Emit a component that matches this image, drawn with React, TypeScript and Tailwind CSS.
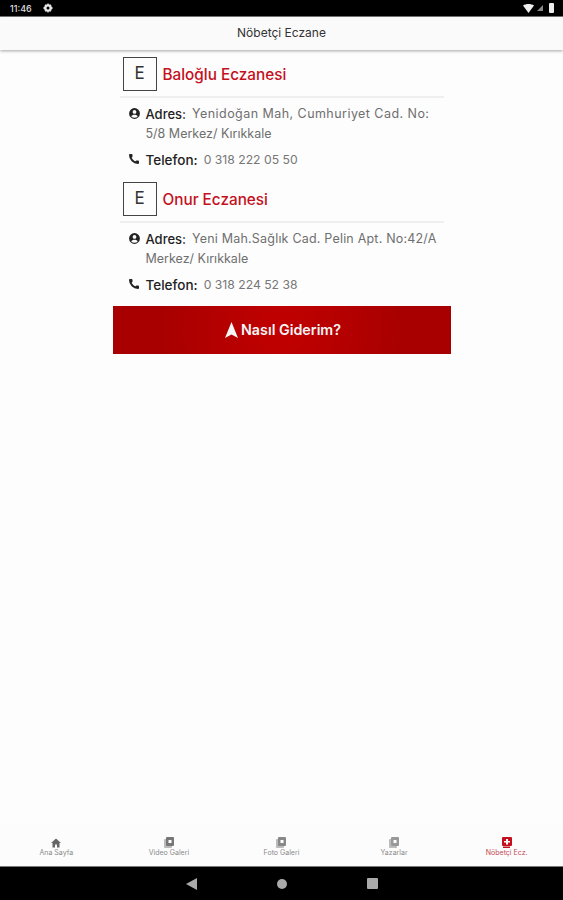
import { Phone } from "lucide-react";

const font = "font-['Inter','Liberation_Sans',sans-serif]";

const pharmacies = [
  {
    name: "Baloğlu Eczanesi",
    address: "Yenidoğan Mah, Cumhuriyet Cad. No:",
    addressClass: "tracking-[0.45px]",
    address2: "5/8 Merkez/ Kırıkkale",
    phone: "0 318 222 05 50",
  },
  {
    name: "Onur Eczanesi",
    address: "Yeni Mah.Sağlık Cad. Pelin Apt. No:42/A",
    addressClass: "tracking-[0.2px]",
    address2: "Merkez/ Kırıkkale",
    phone: "0 318 224 52 38",
  },
];

function StatusBar() {
  return (
    <div className="flex h-[17px] items-center justify-between border-b border-[#777] bg-black pl-[10px] pr-[9px] text-[#ddd]">
      <div className="flex items-center gap-[11px]">
        <span className="text-[9px] font-medium leading-none">11:46</span>
        <svg width="10" height="10" viewBox="0 0 10 10" fill="#e5e5e5">
          <path d="M5 0l1 1.500h2L8.500 3.500 10 5 8.500 6.500 8 8.500H6L5 10 4 8.500H2L1.500 6.500 0 5l1.500-1.500L2 1.500h2z" />
          <circle cx="5" cy="5" r="1.500" fill="#000" />
        </svg>
      </div>
      <div className="flex items-center gap-[3px]">
        <svg width="11" height="9" viewBox="0 0 11 9" fill="#eee">
          <path d="M0 1.500C3 -.500 8 -.500 11 1.500L5.500 9z" />
        </svg>
        <svg width="6" height="6" viewBox="0 0 6 6" fill="#888">
          <path d="M6 0v6H0z" />
        </svg>
        <div className="ml-[3px] h-[10px] w-[5px] rounded-[1px] bg-[#eee]" />
      </div>
    </div>
  );
}

function PharmacyCard({ p }: { p: (typeof pharmacies)[number] }) {
  return (
    <div className="h-[125px]">
      <div className="mx-[7px] box-content flex h-[39px] items-start border-b-2 border-[#efefef] pl-[3px]">
        <div className="flex h-[34px] w-[34px] items-center justify-center border border-[#444] text-[17px] text-[#333]">
          E
        </div>
        <span className="ml-[6px] text-[15.300px] font-medium leading-[36px] text-[#c4101c]">{p.name}</span>
      </div>
      <div className="mt-[6px] flex pl-[15px] pr-[12px]">
        <svg className="mt-[3px] shrink-0" width="13" height="13" viewBox="0 0 24 24" fill="#222">
          <path d="M12 2a10 10 0 1 0 0 20 10 10 0 0 0 0-20zm0 3.500a3.500 3.500 0 1 1 0 7 3.500 3.500 0 0 1 0-7zm0 14.500a8 8 0 0 1-6.200-3c.800-1.700 3.800-2.800 6.200-2.800s5.400 1.100 6.200 2.800A8 8 0 0 1 12 20z" />
        </svg>
        <div className="ml-[5px] text-[12.500px] leading-[20px] text-[#6f6f6f]">
          <div className="flex whitespace-nowrap">
            <span className="text-[13px] font-medium text-[#222]">Adres:</span>
            <span className={`ml-[6px] ${p.addressClass}`}>{p.address}</span>
          </div>
          <div>{p.address2}</div>
        </div>
      </div>
      <div className="mt-[6px] flex items-center pl-[15px]">
        <Phone className="mb-[3px] shrink-0 text-[#222]" size={12} fill="#222" strokeWidth={0} />
        <span className="ml-[6px] text-[13.500px] font-medium leading-[20px] text-[#222]">Telefon:</span>
        <span className="ml-[6px] text-[12.200px] text-[#777]">{p.phone}</span>
      </div>
    </div>
  );
}

function NavItem({ label, icon, active }: { label: string; icon: React.ReactNode; active?: boolean }) {
  return (
    <div className="flex w-[112.600px] flex-col items-center">
      <div className="flex h-[13px] items-center justify-center">{icon}</div>
      <span className={`-mt-[1px] text-[7px] leading-[10px] ${active ? "text-[#c44a55]" : "text-[#8a8a8a]"}`}>{label}</span>
    </div>
  );
}

function GalleryIcon({ color = "#777" }: { color?: string }) {
  return (
    <svg width="10" height="11" viewBox="0 0 10 11">
      <rect x="0" y="2" width="8" height="9" rx="1" fill="#bbb" />
      <rect x="2" y="0" width="8" height="9" rx="1" fill={color} />
      <rect x="4.500" y="3" width="3" height="3" fill="#fff" />
    </svg>
  );
}

export default function App() {
  return (
    <div className={`flex h-[900px] w-[563px] flex-col bg-[#fdfdfd] ${font}`}>
      <StatusBar />
      <header className="z-10 flex h-[33px] items-center justify-center bg-[#fafafa] pb-[1px] text-[12px] text-[#333] shadow-[0_1px_3px_rgba(0,0,0,0.35)]">
        Nöbetçi Eczane
      </header>
      <main className="mx-auto flex w-[338px] flex-1 flex-col pt-[7px]">
        <PharmacyCard p={pharmacies[0]} />
        <PharmacyCard p={pharmacies[1]} />
        <button className="-mt-[1px] flex h-[48px] w-full items-center justify-center gap-[3px] bg-[radial-gradient(circle_at_center,#c20000,#a80000_70%)] pl-[3px] text-[14.300px] font-semibold text-[#f5f5f5]">
          <svg width="13" height="16" viewBox="0 0 13 16" fill="#f5f5f5">
            <path d="M6.500 0L13 16 6.500 12.500 0 16z" />
          </svg>
          Nasıl Giderim?
        </button>
      </main>
      <nav className="flex h-[41px] items-start bg-[#fcfcfc] pt-[11px]">
        <NavItem
          label="Ana Sayfa"
          icon={
            <svg width="10" height="10" viewBox="0 0 10 10" fill="#666">
              <path d="M5 .500L10 5H8.500v4.500H6V6.500H4v3H1.500V5H0z" />
            </svg>
          }
        />
        <NavItem label="Video Galeri" icon={<GalleryIcon />} />
        <NavItem label="Foto Galeri" icon={<GalleryIcon color="#888" />} />
        <NavItem label="Yazarlar" icon={<GalleryIcon color="#999" />} />
        <NavItem
          active
          label="Nöbetçi Ecz."
          icon={
            <svg width="10" height="11" viewBox="0 0 10 11">
              <rect width="10" height="9" rx="1" fill="#c4101c" />
              <path d="M4 2h2v2h2v1.500H6v2H4v-2H2V4h2z" fill="#fff" />
              <rect x="1" y="9.500" width="7" height="1.500" fill="#c4101c" />
            </svg>
          }
        />
      </nav>
      <div className="flex h-[34px] items-center justify-center gap-[80px] border-t border-[#777] bg-black">
        <svg width="11" height="12" viewBox="0 0 11 12" fill="#aaa">
          <path d="M11 0v12L0 6z" />
        </svg>
        <div className="h-[10px] w-[10px] rounded-full bg-[#aaa]" />
        <div className="h-[11px] w-[11px] rounded-[1px] bg-[#aaa]" />
      </div>
    </div>
  );
}
